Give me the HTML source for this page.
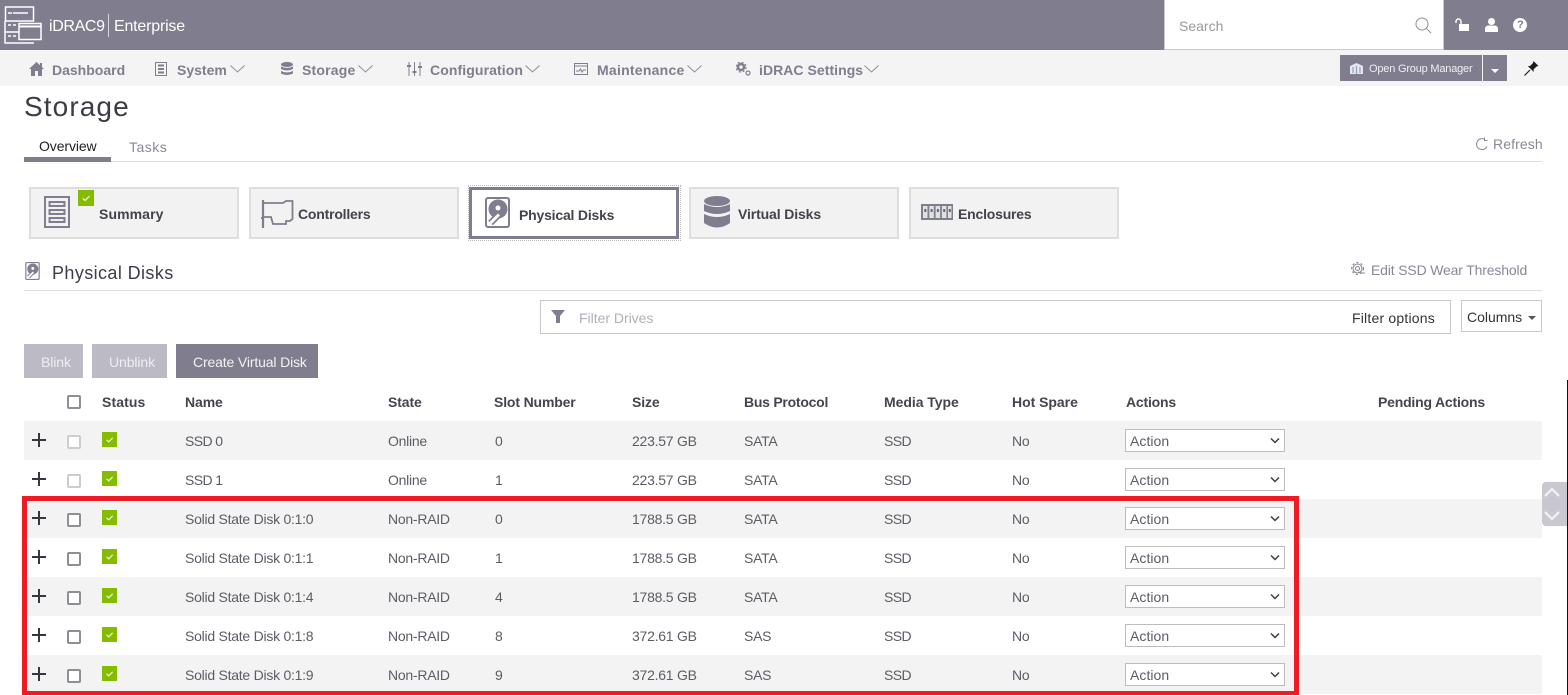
<!DOCTYPE html>
<html lang="en"><head><meta charset="utf-8"><title>Storage</title>
<style>
html,body{margin:0;padding:0;width:1568px;height:695px;overflow:hidden;background:#fff}
body{position:relative;font-family:"Liberation Sans",sans-serif;font-size:14px;color:#4a4a55}
div,span,svg{position:absolute}
.t{white-space:nowrap;line-height:20px;height:20px}
.n{font-weight:bold;color:#7f7d8e;font-size:14px;letter-spacing:0}
.h{font-weight:bold;color:#45454f;font-size:14px;letter-spacing:-.1px}
.c{color:#5c5c66;font-size:14px;letter-spacing:-.25px}
.u{letter-spacing:-.6px}
.a{letter-spacing:.05px}
.tab{top:187px;width:206px;height:48px;background:#f2f2f2;border:2px solid #dedede}
.tt{font-weight:bold;color:#43434d;font-size:14px;letter-spacing:-.2px}
.row{left:24px;width:1518px;height:39px;border-radius:2px}
.cb{width:10px;height:10px;border:2px solid #8e8e96;border-radius:2px;background:#fff;left:67px}
.cbd{border-color:#cdcdcd}
.sel{left:1125px;width:158px;height:21px;border:1px solid #bdbdbd;background:#fff}
</style></head><body>
<svg width="0" height="0" style="left:0;top:0"><defs>
<symbol id="ok" viewBox="0 0 15 15"><rect width="15" height="15" fill="#85bb00"/><path d="M4.5 7.8l2.2 2 4-4" fill="none" stroke="#e8f3cc" stroke-width="1.3"/></symbol>
<symbol id="plus" viewBox="0 0 14 14"><path d="M7 0v14M0 7h14" stroke="#36363e" stroke-width="2" fill="none"/></symbol>
<symbol id="arr" viewBox="0 0 10 7"><path d="M1 1.5l4 4 4-4" fill="none" stroke="#3c3c44" stroke-width="1.5"/></symbol>
<symbol id="chev" viewBox="0 0 15 8"><path d="M.5 .5l7 6.5 7-6.5" fill="none" stroke="#8e8c9b" stroke-width="1"/></symbol>
<symbol id="disk" viewBox="0 0 25 31"><rect x="1" y="1" width="23" height="29" rx="2" fill="none" stroke="#7f7d8e" stroke-width="2"/><circle cx="13" cy="12" r="9.5" fill="#7f7d8e"/><circle cx="13" cy="11" r="2.500" fill="#fff"/><path d="M5.500 26L14 17.500" stroke="#7f7d8e" stroke-width="6.500"/><path d="M5.500 26L14 17.500" stroke="#fff" stroke-width="3"/></symbol>
</defs></svg>

<!-- header -->
<div style="left:0;top:0;width:1568px;height:50px;background:#7f7d8e"></div>
<svg style="left:4px;top:6px" width="38" height="39" viewBox="0 0 38 39" fill="none" stroke="#fff" stroke-width="1.500">
<rect x="1.500" y="1" width="28" height="14"/><path d="M4 7h4M9 7h15"/>
<path d="M1 15v22h29M1 26h14"/><path d="M4 19h3M9 19h3M4 30h3M9 30h3"/>
<rect x="15" y="17.500" width="22" height="16"/><path d="M15 20.500h22" stroke-width="2"/></svg>
<span class="t" style="left:49px;top:17px;color:#fff;font-size:16px;letter-spacing:-.35px">iDRAC9</span>
<div style="left:108px;top:14px;width:1px;height:23px;background:#d8d7de"></div>
<span class="t" style="left:114px;top:17px;color:#fff;font-size:16px;letter-spacing:-.2px">Enterprise</span>
<div style="left:1164px;top:0;width:278px;height:49px;background:#fff;border:solid #c9c9c9;border-width:0 1px 1px 1px"></div>
<span class="t" style="left:1179px;top:16px;color:#9a9a9a;font-size:14px">Search</span>
<svg style="left:1415px;top:17px" width="17" height="17" viewBox="0 0 17 17" fill="none" stroke="#8e8e96" stroke-width="1"><circle cx="7" cy="7" r="6"/><path d="M11.300 11.300l4.700 4.700"/></svg>
<svg style="left:1455px;top:18px" width="16" height="15" viewBox="0 0 16 15"><path d="M1 5V3.500a2.500 2.500 0 0 1 5 0V6" fill="none" stroke="#fff" stroke-width="1.400"/><rect x="4" y="6" width="10" height="7" fill="#fff"/></svg>
<svg style="left:1485px;top:18px" width="13" height="14" viewBox="0 0 13 14" fill="#fff"><circle cx="6.500" cy="3.500" r="3.500"/><path d="M0 14v-3q0-3 3-3.500h7q3 .5 3 3.500v3z"/></svg>
<div style="left:1513px;top:18px;width:14px;height:14px;border-radius:50%;background:#fff"></div>
<span class="t" style="left:1517px;top:15px;font-size:11px;font-weight:bold;color:#7f7d8e">?</span>

<!-- nav -->
<div style="left:0;top:50px;width:1568px;height:36px;background:#f4f4f4"></div>
<svg style="left:29px;top:62px" width="15" height="14" viewBox="0 0 15 14" fill="#7f7d8e"><path d="M7.500 0L11 3.200V1h2v4l2 2h-2v7H9V9H6v5H2V7H0z"/></svg>
<span class="t n" style="left:52px;top:60px">Dashboard</span>
<svg style="left:155px;top:62px" width="12" height="14" viewBox="0 0 12 14" fill="none" stroke="#7f7d8e"><rect x=".5" y=".5" width="11" height="13"/><path d="M3 3.500h6M3 7h6M3 10.500h6" stroke-width="2"/></svg>
<span class="t n" style="left:177px;top:60px">System</span>
<svg style="left:230px;top:65px" width="15" height="8"><use href="#chev"/></svg>
<svg style="left:281px;top:62px" width="12" height="14" viewBox="0 0 12 14" fill="#7f7d8e"><ellipse cx="6" cy="2.500" rx="6" ry="2.500"/><path d="M0 4.500q6 3 12 0V7q-6 3-12 0zM0 9q6 3 12 0v2.500q-6 3-12 0z"/></svg>
<span class="t n" style="left:302px;top:60px;letter-spacing:.2px">Storage</span>
<svg style="left:358px;top:65px" width="15" height="8"><use href="#chev"/></svg>
<svg style="left:407px;top:62px" width="15" height="14" viewBox="0 0 15 14" fill="none" stroke="#7f7d8e"><path d="M2 0v14M7.500 0v14M13 0v14"/><path d="M0 4h4M5.500 10h4M11 5h4" stroke-width="2"/></svg>
<span class="t n" style="left:430px;top:60px;letter-spacing:.1px">Configuration</span>
<svg style="left:525px;top:65px" width="15" height="8"><use href="#chev"/></svg>
<svg style="left:574px;top:63px" width="14" height="12" viewBox="0 0 14 12" fill="none" stroke="#7f7d8e"><rect x=".5" y=".5" width="13" height="11"/><path d="M1 3h12M2 8h3l1.500-2 1.500 3 1.500-2H12"/></svg>
<span class="t n" style="left:597px;top:60px;letter-spacing:.25px">Maintenance</span>
<svg style="left:687px;top:65px" width="15" height="8"><use href="#chev"/></svg>
<svg style="left:736px;top:62px" width="15" height="14" viewBox="0 0 15 14" fill="#7f7d8e"><circle cx="5" cy="5" r="3" fill="none" stroke="#7f7d8e" stroke-width="2.500"/><circle cx="5" cy="5" r="5" fill="none" stroke="#7f7d8e" stroke-width="1.200" stroke-dasharray="2 2"/><circle cx="12" cy="11" r="2" fill="none" stroke="#7f7d8e" stroke-width="1.200"/></svg>
<span class="t n" style="left:759px;top:60px;letter-spacing:.05px">iDRAC Settings</span>
<svg style="left:864px;top:65px" width="15" height="8"><use href="#chev"/></svg>
<div style="left:1340px;top:55px;width:142px;height:26px;background:#7f7d8e"></div>
<svg style="left:1350px;top:63px" width="13" height="11" viewBox="0 0 13 11"><path d="M0 3l6.500-3L13 3v8H0z" fill="#e6e6ee"/><path d="M3 4v6M6.500 3v8M10 4v6" stroke="#8fa0c0" stroke-width="1.200"/></svg>
<span class="t" style="left:1369px;top:59px;color:#f0f0f4;font-size:11px;letter-spacing:-.2px">Open Group Manager</span>
<div style="left:1483px;top:55px;width:24px;height:26px;background:#7f7d8e"></div>
<div style="left:1491px;top:69px;border:solid transparent;border-width:4px 4px 0;border-top-color:#fff"></div>
<svg style="left:1524px;top:60px" width="16" height="16" viewBox="0 0 16 16"><path d="M.5 15.500L6 10" stroke="#222" stroke-width="1.200"/><path d="M9.500 1l5 5-2 .5-3 3 .3 2.500-6-6L6 6l3-3z" fill="#1c1c1c"/></svg>

<!-- title -->
<span class="t" style="left:24px;top:92px;height:30px;line-height:30px;font-size:28px;color:#3c3c44;letter-spacing:1.1px">Storage</span>
<span class="t" style="left:39px;top:136px;color:#222;font-size:14px;letter-spacing:-.1px">Overview</span>
<span class="t" style="left:129px;top:137px;color:#8a8896;font-size:14px;letter-spacing:.5px">Tasks</span>
<div style="left:24px;top:161px;width:1518px;height:1px;background:#dedede"></div>
<div style="left:24px;top:157px;width:87px;height:5px;background:#7f7d8e"></div>
<svg style="left:1475px;top:137px" width="14" height="14" viewBox="0 0 14 14" fill="none" stroke="#8a8896"><path d="M12 9.500A5.500 5.500 0 1 1 10 2.500"/><path d="M9.500 .5v3h3"/></svg>
<span class="t" style="left:1493px;top:134px;color:#8a8896;font-size:14px;letter-spacing:.1px">Refresh</span>

<!-- tabs -->
<div class="tab" style="left:29px"></div>
<svg style="left:44px;top:196px" width="26" height="32" viewBox="0 0 26 32" fill="none" stroke="#7f7d8e"><rect x="1" y="1" width="24" height="30" stroke-width="2"/><rect x="5.500" y="6" width="15" height="4" fill="#eee" stroke-width="2"/><rect x="5.500" y="14" width="15" height="4" fill="#eee" stroke-width="2"/><rect x="5.500" y="22" width="15" height="4" fill="#eee" stroke-width="2"/></svg>
<svg style="left:78px;top:190px" width="16" height="16"><use href="#ok"/></svg>
<span class="t tt" style="left:99px;top:204px;letter-spacing:.1px">Summary</span>
<div class="tab" style="left:249px"></div>
<svg style="left:261px;top:200px" width="33" height="28" viewBox="0 0 33 28" fill="none" stroke="#7f7d8e" stroke-width="1.800"><path d="M2 0v28" stroke-width="2.200"/><path d="M0 18h3M3 3h19l3-2h6.500v18L29 21h-4v3H12l-2-7H3"/></svg>
<span class="t tt" style="left:298px;top:204px">Controllers</span>
<div style="left:468px;top:185px;width:211px;height:54px;border:1px dotted #bbb"></div>
<div style="left:469px;top:187px;width:204px;height:46px;background:#fff;border:3px solid #7f7d8e"></div>
<svg style="left:485px;top:197px" width="25" height="31"><use href="#disk"/></svg>
<span class="t tt" style="left:519px;top:205px">Physical Disks</span>
<div class="tab" style="left:689px"></div>
<svg style="left:704px;top:196px" width="26" height="32" viewBox="0 0 26 32" fill="#7f7d8e"><ellipse cx="13" cy="5" rx="13" ry="5"/><path d="M0 8q13 6 26 0v7q-13 6-26 0zM0 18q13 6 26 0v9q-13 9-26 0z"/></svg>
<span class="t tt" style="left:738px;top:204px;letter-spacing:-.12px">Virtual Disks</span>
<div class="tab" style="left:909px"></div>
<svg style="left:921px;top:204px" width="32" height="16" viewBox="0 0 32 16"><rect width="32" height="16" fill="#7f7d8e"/><g fill="#dfe3e0"><rect x="2" y="2" width="4.500" height="12"/><rect x="8.300" y="2" width="4.500" height="12"/><rect x="14.600" y="2" width="4.500" height="12"/><rect x="20.900" y="2" width="4.500" height="12"/><rect x="27" y="2" width="3.500" height="12"/></g><g fill="#66647a"><rect x="3.300" y="5" width="2" height="3"/><rect x="9.600" y="5" width="2" height="3"/><rect x="15.900" y="5" width="2" height="3"/><rect x="22.200" y="5" width="2" height="3"/><rect x="27.800" y="5" width="2" height="3"/></g></svg>
<span class="t tt" style="left:958px;top:204px">Enclosures</span>

<!-- section -->
<svg style="left:25px;top:262px" width="15" height="18"><use href="#disk"/></svg>
<span class="t" style="left:52px;top:263px;color:#3d3d47;font-size:18px;letter-spacing:.4px">Physical Disks</span>
<div style="left:24px;top:290px;width:1518px;height:1px;background:#dedede"></div>
<svg style="left:1351px;top:262px" width="15" height="15" viewBox="0 0 15 15" fill="none" stroke="#8a8896" stroke-width="1.100"><circle cx="6.500" cy="6.500" r="2"/><circle cx="6.500" cy="6.500" r="4.500"/><circle cx="6.500" cy="6.500" r="6" stroke-dasharray="2 2.500"/><path d="M7 10l3 1h4"/></svg>
<span class="t" style="left:1371px;top:260px;color:#8a8896;font-size:14px;letter-spacing:-.16px">Edit SSD Wear Threshold</span>

<!-- filter -->
<div style="left:540px;top:300px;width:909px;height:32px;border:1px solid #c8c8c8"></div>
<svg style="left:551px;top:310px" width="14" height="13" viewBox="0 0 14 13" fill="#7f7d8e"><path d="M0 0h14L9 6v7H5V6z"/></svg>
<span class="t" style="left:579px;top:308px;color:#b0b0b8;font-size:14px;letter-spacing:-.02px">Filter Drives</span>
<span class="t" style="left:1352px;top:308px;color:#33333b;font-size:14px;letter-spacing:.2px">Filter options</span>
<div style="left:1461px;top:300px;width:79px;height:30px;border:1px solid #c8c8c8"></div>
<span class="t" style="left:1467px;top:307px;color:#33333b;font-size:14px;letter-spacing:-.02px">Columns</span>
<div style="left:1528px;top:316px;border:solid transparent;border-width:4px 4px 0;border-top-color:#55555e"></div>

<!-- buttons -->
<div style="left:24px;top:344px;width:59px;height:34px;background:#bcbbc5"></div>
<span class="t" style="left:41px;top:352px;color:#eeeef2;font-size:14px;letter-spacing:-.1px">Blink</span>
<div style="left:92px;top:344px;width:75px;height:34px;background:#bcbbc5"></div>
<span class="t" style="left:109px;top:352px;color:#eeeef2;font-size:14px;letter-spacing:-.1px">Unblink</span>
<div style="left:176px;top:344px;width:142px;height:34px;background:#7f7d8e"></div>
<span class="t" style="left:193px;top:352px;color:#f2f2f6;font-size:14px;letter-spacing:-.14px">Create Virtual Disk</span>

<!-- table head -->
<div class="cb" style="top:395px"></div>
<span class="t h" style="left:102px;top:392px;letter-spacing:.1px">Status</span>
<span class="t h" style="left:185px;top:392px">Name</span>
<span class="t h" style="left:388px;top:392px">State</span>
<span class="t h" style="left:494px;top:392px;letter-spacing:-.15px">Slot Number</span>
<span class="t h" style="left:632px;top:392px">Size</span>
<span class="t h" style="left:744px;top:392px;letter-spacing:-.25px">Bus Protocol</span>
<span class="t h" style="left:884px;top:392px;letter-spacing:-.05px">Media Type</span>
<span class="t h" style="left:1012px;top:392px;letter-spacing:-.03px">Hot Spare</span>
<span class="t h" style="left:1126px;top:392px;letter-spacing:-.2px">Actions</span>
<span class="t h" style="left:1378px;top:392px;letter-spacing:-.2px">Pending Actions</span>

<!-- row stripes -->
<div class="row" style="top:421px;background:#f3f3f3"></div>
<div class="row" style="top:499px;background:#f3f3f3"></div>
<div class="row" style="top:577px;background:#f3f3f3"></div>
<div class="row" style="top:655px;background:#f3f3f3"></div>

<!-- row 1 -->
<svg style="left:32px;top:433px" width="14" height="14"><use href="#plus"/></svg>
<div class="cb cbd" style="top:435px"></div>
<svg style="left:102px;top:432px" width="15" height="15"><use href="#ok"/></svg>
<span class="t c u" style="left:185px;top:431px">SSD 0</span>
<span class="t c" style="left:388px;top:431px">Online</span>
<span class="t c" style="left:495px;top:431px">0</span>
<span class="t c" style="left:632px;top:431px">223.57 GB</span>
<span class="t c" style="left:744px;top:431px">SATA</span>
<span class="t c u" style="left:884px;top:431px">SSD</span>
<span class="t c" style="left:1012px;top:431px">No</span>
<div class="sel" style="top:429px"></div>
<span class="t c a" style="left:1130px;top:431px">Action</span>
<svg style="left:1270px;top:437px" width="10" height="7"><use href="#arr"/></svg>

<!-- row 2 -->
<svg style="left:32px;top:472px" width="14" height="14"><use href="#plus"/></svg>
<div class="cb cbd" style="top:474px"></div>
<svg style="left:102px;top:471px" width="15" height="15"><use href="#ok"/></svg>
<span class="t c u" style="left:185px;top:470px">SSD 1</span>
<span class="t c" style="left:388px;top:470px">Online</span>
<span class="t c" style="left:495px;top:470px">1</span>
<span class="t c" style="left:632px;top:470px">223.57 GB</span>
<span class="t c" style="left:744px;top:470px">SATA</span>
<span class="t c u" style="left:884px;top:470px">SSD</span>
<span class="t c" style="left:1012px;top:470px">No</span>
<div class="sel" style="top:468px"></div>
<span class="t c a" style="left:1130px;top:470px">Action</span>
<svg style="left:1270px;top:476px" width="10" height="7"><use href="#arr"/></svg>

<!-- row 3 -->
<svg style="left:32px;top:511px" width="14" height="14"><use href="#plus"/></svg>
<div class="cb" style="top:513px"></div>
<svg style="left:102px;top:510px" width="15" height="15"><use href="#ok"/></svg>
<span class="t c" style="left:185px;top:509px">Solid State Disk 0:1:0</span>
<span class="t c" style="left:388px;top:509px">Non-RAID</span>
<span class="t c" style="left:495px;top:509px">0</span>
<span class="t c" style="left:632px;top:509px">1788.5 GB</span>
<span class="t c" style="left:744px;top:509px">SATA</span>
<span class="t c u" style="left:884px;top:509px">SSD</span>
<span class="t c" style="left:1012px;top:509px">No</span>
<div class="sel" style="top:507px"></div>
<span class="t c a" style="left:1130px;top:509px">Action</span>
<svg style="left:1270px;top:515px" width="10" height="7"><use href="#arr"/></svg>

<!-- row 4 -->
<svg style="left:32px;top:550px" width="14" height="14"><use href="#plus"/></svg>
<div class="cb" style="top:552px"></div>
<svg style="left:102px;top:549px" width="15" height="15"><use href="#ok"/></svg>
<span class="t c" style="left:185px;top:548px">Solid State Disk 0:1:1</span>
<span class="t c" style="left:388px;top:548px">Non-RAID</span>
<span class="t c" style="left:495px;top:548px">1</span>
<span class="t c" style="left:632px;top:548px">1788.5 GB</span>
<span class="t c" style="left:744px;top:548px">SATA</span>
<span class="t c u" style="left:884px;top:548px">SSD</span>
<span class="t c" style="left:1012px;top:548px">No</span>
<div class="sel" style="top:546px"></div>
<span class="t c a" style="left:1130px;top:548px">Action</span>
<svg style="left:1270px;top:554px" width="10" height="7"><use href="#arr"/></svg>

<!-- row 5 -->
<svg style="left:32px;top:589px" width="14" height="14"><use href="#plus"/></svg>
<div class="cb" style="top:591px"></div>
<svg style="left:102px;top:588px" width="15" height="15"><use href="#ok"/></svg>
<span class="t c" style="left:185px;top:587px">Solid State Disk 0:1:4</span>
<span class="t c" style="left:388px;top:587px">Non-RAID</span>
<span class="t c" style="left:495px;top:587px">4</span>
<span class="t c" style="left:632px;top:587px">1788.5 GB</span>
<span class="t c" style="left:744px;top:587px">SATA</span>
<span class="t c u" style="left:884px;top:587px">SSD</span>
<span class="t c" style="left:1012px;top:587px">No</span>
<div class="sel" style="top:585px"></div>
<span class="t c a" style="left:1130px;top:587px">Action</span>
<svg style="left:1270px;top:593px" width="10" height="7"><use href="#arr"/></svg>

<!-- row 6 -->
<svg style="left:32px;top:628px" width="14" height="14"><use href="#plus"/></svg>
<div class="cb" style="top:630px"></div>
<svg style="left:102px;top:627px" width="15" height="15"><use href="#ok"/></svg>
<span class="t c" style="left:185px;top:626px">Solid State Disk 0:1:8</span>
<span class="t c" style="left:388px;top:626px">Non-RAID</span>
<span class="t c" style="left:495px;top:626px">8</span>
<span class="t c" style="left:632px;top:626px">372.61 GB</span>
<span class="t c" style="left:744px;top:626px">SAS</span>
<span class="t c u" style="left:884px;top:626px">SSD</span>
<span class="t c" style="left:1012px;top:626px">No</span>
<div class="sel" style="top:624px"></div>
<span class="t c a" style="left:1130px;top:626px">Action</span>
<svg style="left:1270px;top:632px" width="10" height="7"><use href="#arr"/></svg>

<!-- row 7 -->
<svg style="left:32px;top:667px" width="14" height="14"><use href="#plus"/></svg>
<div class="cb" style="top:669px"></div>
<svg style="left:102px;top:666px" width="15" height="15"><use href="#ok"/></svg>
<span class="t c" style="left:185px;top:665px">Solid State Disk 0:1:9</span>
<span class="t c" style="left:388px;top:665px">Non-RAID</span>
<span class="t c" style="left:495px;top:665px">9</span>
<span class="t c" style="left:632px;top:665px">372.61 GB</span>
<span class="t c" style="left:744px;top:665px">SAS</span>
<span class="t c u" style="left:884px;top:665px">SSD</span>
<span class="t c" style="left:1012px;top:665px">No</span>
<div class="sel" style="top:663px"></div>
<span class="t c a" style="left:1130px;top:665px">Action</span>
<svg style="left:1270px;top:671px" width="10" height="7"><use href="#arr"/></svg>

<!-- red highlight -->
<div style="left:22px;top:496px;width:1267px;height:190px;border:5px solid #ed1c24;border-bottom-width:4px"></div>

<!-- scroll arrows -->
<div style="left:1542px;top:482px;width:25px;height:44px;background:#c9c8d1;border-radius:4px 0 0 4px"></div>
<svg style="left:1544px;top:487px" width="16" height="34" viewBox="0 0 16 34" fill="none" stroke="#f4f4f6" stroke-width="2.200"><path d="M1 9l7-7 7 7M1 25l7 7 7-7"/></svg>
<div style="left:1567px;top:380px;width:1px;height:315px;background:#111"></div>
</body></html>
